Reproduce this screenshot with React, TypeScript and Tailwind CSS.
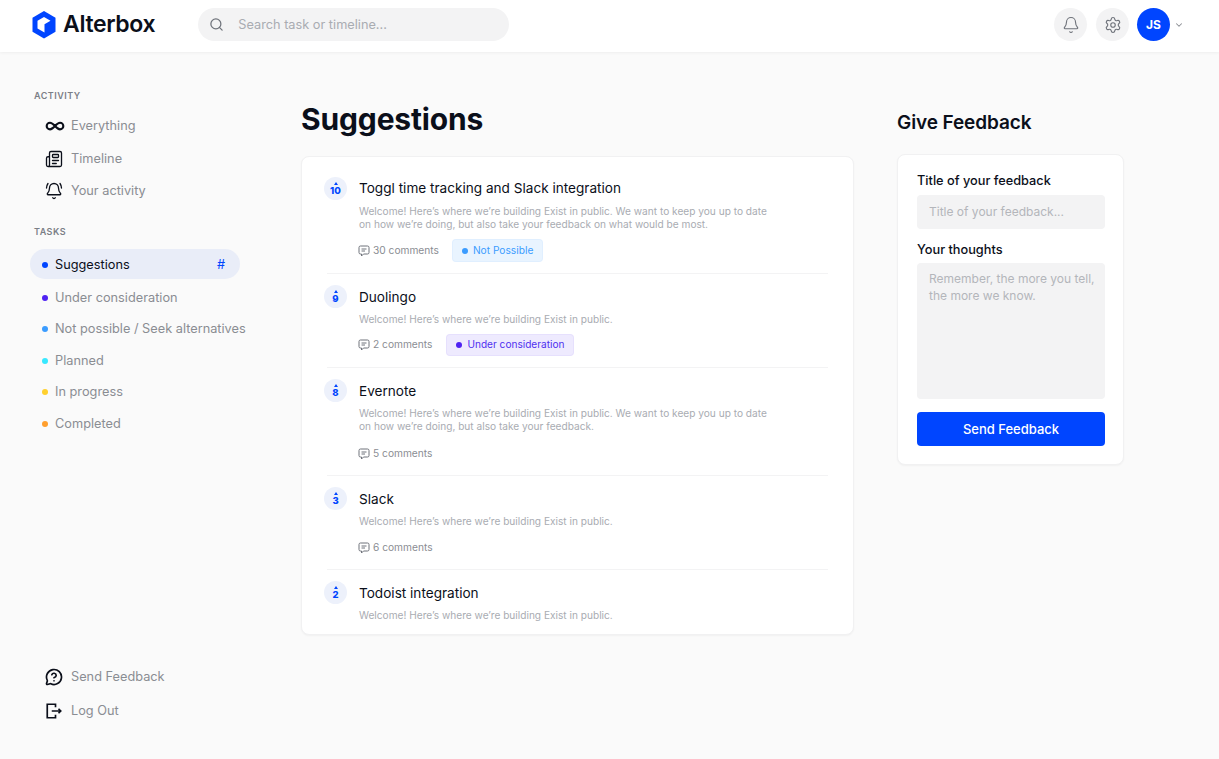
import { Bell, BellRing, ChevronDown, Infinity as InfinityIcon, MessageCircleQuestion, Newspaper, Search, Settings } from 'lucide-react'

const statuses = [
  { label: 'Suggestions', dot: 'bg-[#0045ff]', active: true, h: 'h-[30px]' },
  { label: 'Under consideration', dot: 'bg-[#4f22f2]', h: 'mt-[3px] h-[31px]' },
  { label: 'Not possible / Seek alternatives', dot: 'bg-[#3b9cff]', h: 'h-[31px]' },
  { label: 'Planned', dot: 'bg-[#38e8ff]', h: 'h-[32px]' },
  { label: 'In progress', dot: 'bg-[#ffd02e]', h: 'h-[31px]' },
  { label: 'Completed', dot: 'bg-[#ff9f2e]', h: 'h-[32px]' },
]

const long = 'Welcome! Here’s where we’re building Exist in public. We want to keep you up to date'
const short = 'Welcome! Here’s where we’re building Exist in public.'

const tasks = [
  {
    votes: 10,
    title: 'Toggl time tracking and Slack integration',
    desc: [long, 'on how we’re doing, but also take your feedback on what would be most.'],
    comments: '30 comments',
    badge: 'possible',
    metaGap: 'mt-[9px]',
    pad: 'pb-[12px]',
  },
  { votes: 9, title: 'Duolingo', desc: [short], comments: '2 comments', badge: 'consideration', metaGap: 'mt-[8px]', pad: 'pb-[12px]' },
  {
    votes: 8,
    title: 'Evernote',
    desc: [long, 'on how we’re doing, but also take your feedback.'],
    comments: '5 comments',
    metaGap: 'mt-[10px]',
    pad: 'pb-[11px]',
  },
  { votes: 3, title: 'Slack', desc: [short], comments: '6 comments', metaGap: 'mt-[9px]', pad: 'pb-[11px]' },
  { votes: 2, title: 'Todoist integration', desc: [short], pad: 'pb-[12px]' },
]

function Logo() {
  return (
    <svg width="24" height="28" viewBox="0 0 24 28" className="shrink-0">
      <path d="M12 0 L23.5 6.8 V20.8 L12 27.6 L0.5 20.8 V6.8 Z" fill="#0045ff" />
      <path d="M12 6 L18.5 9.8 L12.5 13.2 V21.4 L5.5 17.4 V9.8 Z" fill="#fff" />
    </svg>
  )
}

function CommentIcon() {
  return (
    <svg width="12" height="12" viewBox="0 0 24 24" fill="none" stroke="#6f737b" strokeWidth="2" strokeLinejoin="round" className="ml-[-1px] shrink-0">
      <path d="M2 5a3 3 0 0 1 3-3h14a3 3 0 0 1 3 3v10a3 3 0 0 1-3 3h-8l-4 4v-4H5a3 3 0 0 1-3-3z" />
      <path d="M7 8h10M7 12h7" />
    </svg>
  )
}

function LogOutIcon() {
  return (
    <svg width="18" height="18" viewBox="0 0 24 24" fill="none" stroke="currentColor" strokeWidth="2.25" className="shrink-0">
      <path d="M14 7V3H3v18h11v-4" />
      <path d="M9 12h12M18 9l3 3-3 3" />
    </svg>
  )
}

function NavItem({ icon, label, h }: { icon: React.ReactNode; label: string; h: string }) {
  return (
    <div className={`flex items-center pl-[45px] text-[12.75px] text-[#8a8d93] ${h}`}>
      <span className="flex w-[26px] shrink-0 items-center text-[#0b0f1a]">{icon}</span>
      {label}
    </div>
  )
}

function Votes({ n }: { n: number }) {
  return (
    <div className="mt-[-1px] flex h-[23px] w-[23px] shrink-0 flex-col items-center justify-center rounded-full bg-[#edf1fb] text-[#0045ff]">
      <span className="mb-px h-0 w-0 border-x-[2.5px] border-b-[3px] border-x-transparent border-b-[#0045ff]" />
      <span className="text-[9.5px] leading-[9px] font-extrabold">{n}</span>
    </div>
  )
}

export default function App() {
  return (
    <div className="flex h-screen flex-col bg-[#fafafa] font-['Inter',sans-serif]">
      <header className="z-10 flex h-[52px] shrink-0 items-center bg-white pr-[35px] pb-[3px] pl-[32px] shadow-[0_1px_3px_rgba(0,0,0,0.05)]">
        <Logo />
        <span className="ml-[7px] text-[23px] font-semibold tracking-[-0.35px] text-[#0b0f1a]">Alterbox</span>
        <div className="ml-[43px] flex h-[33px] w-[311px] items-center rounded-full bg-[#f3f3f4] pl-[11px] text-[12.75px] text-[#a9acb2]">
          <Search size={15} className="mr-[14px] text-[#6f737b]" strokeWidth={2} />
          Search task or timeline...
        </div>
        <div className="ml-auto flex items-center">
          <div className="flex h-[33px] w-[33px] items-center justify-center rounded-full bg-[#f3f3f4] text-[#6f737b]">
            <Bell size={18} strokeWidth={1.5} />
          </div>
          <div className="ml-[9px] flex h-[33px] w-[33px] items-center justify-center rounded-full bg-[#f3f3f4] text-[#6f737b]">
            <Settings size={18} strokeWidth={1.5} />
          </div>
          <div className="ml-[8px] flex h-[33px] w-[33px] items-center justify-center rounded-full bg-[#0045ff] text-[12px] font-bold text-white">
            JS
          </div>
          <ChevronDown size={10} strokeWidth={2.5} className="ml-[4px] text-[#8a8d93]" />
        </div>
      </header>

      <div className="flex min-h-0 flex-1">
        <aside className="flex w-[301px] shrink-0 flex-col justify-between pt-[38px] pb-[32px]">
          <div>
            <div className="pl-[34px] text-[9px] leading-[11px] font-semibold tracking-[0.5px] text-[#7a7e86]">ACTIVITY</div>
            <div className="mt-[8px]">
              <NavItem h="h-[33px]" icon={<InfinityIcon size={20} strokeWidth={2.5} />} label="Everything" />
              <NavItem h="h-[33px]" icon={<Newspaper size={18} strokeWidth={1.75} />} label="Timeline" />
              <NavItem h="h-[32px]" icon={<BellRing size={18} strokeWidth={1.75} />} label="Your activity" />
            </div>
            <div className="mt-[19px] pl-[34px] text-[9px] leading-[11px] font-semibold tracking-[0.5px] text-[#7a7e86]">TASKS</div>
            <div className="mt-[12px]">
              {statuses.map((s) => (
                <div
                  key={s.label}
                  className={`ml-[30px] flex w-[210px] items-center whitespace-nowrap rounded-full pt-px pl-[12px] text-[12.75px] ${s.h} ${s.active ? 'bg-[#e9edf8] text-[#0b0f1a]' : 'text-[#8a8d93]'}`}
                >
                  <span className={`mr-[7px] h-[6px] w-[6px] shrink-0 rounded-full ${s.dot}`} />
                  {s.label}
                  {s.active && <span className="mr-[15px] ml-auto text-[#0045ff]">#</span>}
                </div>
              ))}
            </div>
          </div>
          <div>
            <NavItem h="h-[34px]" icon={<MessageCircleQuestion size={18} strokeWidth={2.25} />} label="Send Feedback" />
            <NavItem h="h-[33px]" icon={<LogOutIcon />} label="Log Out" />
          </div>
        </aside>

        <main className="w-[553px] shrink-0 pt-[49px]">
          <h1 className="text-[30px] leading-[36px] font-bold tracking-[-0.15px] text-[#0b0f1a]">Suggestions</h1>
          <div className="mt-[19px] rounded-[8px] border border-[#f1f1f2] bg-white px-[25px] pt-[21px] shadow-[0_1px_2px_rgba(0,0,0,0.04)]">
            {tasks.map((t, i) => (
              <div
                key={t.title}
                className={`flex ${t.pad} ${i > 0 ? 'pt-[12px]' : ''} ${i < tasks.length - 1 ? 'border-b border-[#f3f3f4]' : ''}`}
              >
                <div className="ml-[-3px]"><Votes n={t.votes} /></div>
                <div className="ml-[12px] min-w-0">
                  <div className={`text-[13.6px] leading-[20px] text-[#0b0f1a] ${i > 0 ? 'pt-px' : ''}`}>{t.title}</div>
                  <div className={`text-[10.15px] leading-[13px] whitespace-nowrap text-[#a9acb2] ${i > 0 ? 'mt-[6px]' : 'mt-[7px]'}`}>
                    {t.desc.map((line) => (
                      <div key={line}>{line}</div>
                    ))}
                  </div>
                  {t.comments && (
                    <div className={`flex h-[21px] items-center ${t.metaGap}`}>
                      <CommentIcon />
                      <span className="ml-[3px] text-[10.2px] text-[#8a8d93]">{t.comments}</span>
                      {t.badge === 'possible' && (
                        <span className="ml-[14px] flex h-[21px] items-center rounded-[3px] bg-[#e9f4ff] pt-px pr-[9px] pl-[9px] text-[10.2px] text-[#3b9cff] shadow-[0_0_0_1px_#e0efff]">
                          <span className="mr-[5px] h-[6px] w-[6px] rounded-full bg-[#3b9cff]" />
                          Not Possible
                        </span>
                      )}
                      {t.badge === 'consideration' && (
                        <span className="ml-[15px] flex h-[20px] items-center rounded-[3px] bg-[#eeeafe] px-[9px] text-[10.1px] text-[#4f2ff0] shadow-[0_0_0_1px_#e6e0fd]">
                          <span className="mr-[5px] h-[6px] w-[6px] rounded-full bg-[#4f22f2]" />
                          Under consideration
                        </span>
                      )}
                    </div>
                  )}
                </div>
              </div>
            ))}
          </div>
        </main>

        <aside className="ml-[43px] w-[227px] shrink-0 pt-[58px]">
          <h2 className="text-[19px] leading-[26px] font-semibold tracking-[-0.1px] text-[#0b0f1a]">Give Feedback</h2>
          <div className="mt-[18px] rounded-[8px] border border-[#f1f1f2] bg-white pt-[17px] pr-[18px] pb-[18px] pl-[19px] shadow-[0_1px_2px_rgba(0,0,0,0.04)]">
            <div className="text-[12.75px] leading-[18px] font-medium text-[#0b0f1a]">Title of your feedback</div>
            <div className="mt-[5px] flex h-[34px] items-center rounded-[4px] bg-[#f3f3f4] px-[12px] text-[12px] text-[#b4b6bb]">
              Title of your feedback...
            </div>
            <div className="mt-[12px] text-[12.75px] leading-[18px] font-medium text-[#0b0f1a]">Your thoughts</div>
            <div className="mt-[4px] h-[136px] whitespace-nowrap rounded-[4px] bg-[#f3f3f4] px-[12px] pt-[7px] text-[12px] leading-[17px] text-[#b4b6bb]">
              Remember, the more you tell,<br />the more we know.
            </div>
            <button className="mt-[13px] h-[34px] w-full rounded-[4px] bg-[#0045ff] pt-px text-[13px] font-medium text-white">
              Send Feedback
            </button>
          </div>
        </aside>
      </div>
    </div>
  )
}
